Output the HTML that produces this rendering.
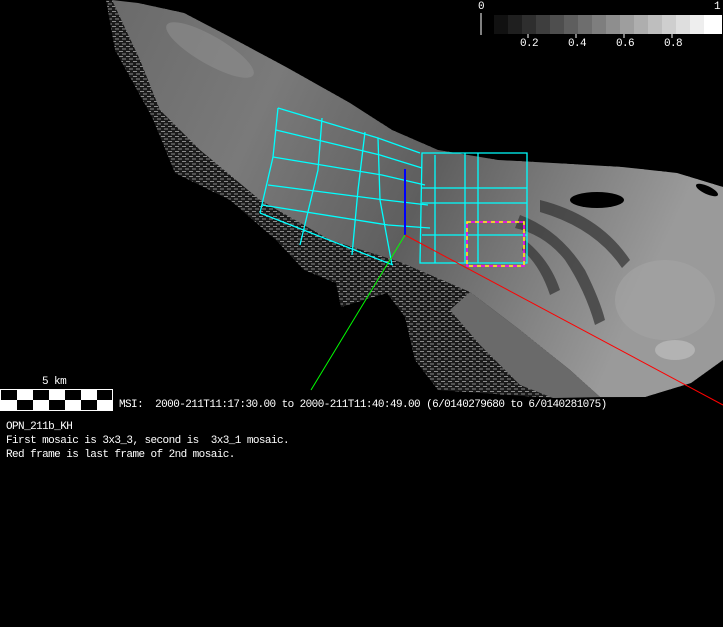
<!DOCTYPE html>
<html><head><style>
body{margin:0;background:#000;width:723px;height:627px;overflow:hidden;position:relative;font-family:"Liberation Mono",monospace;}
.t{position:absolute;color:#fff;font-size:11px;letter-spacing:-0.58px;white-space:pre;line-height:14px;}
</style></head><body>
<svg width="723" height="627" style="position:absolute;left:0;top:0">
<defs>
<pattern id="p" width="7" height="5" patternUnits="userSpaceOnUse">
<rect width="7" height="5" fill="#1a1a1a"/><path d="M0 1.5h4M3 4h4" stroke="#8a8a8a" stroke-width="1"/>
</pattern>
<linearGradient id="g" x1="0" y1="0" x2="1" y2="0.3">
<stop offset="0" stop-color="#6a6a6a"/><stop offset="0.3" stop-color="#7a7a7a"/><stop offset="0.6" stop-color="#5e5e5e"/><stop offset="1" stop-color="#9a9a9a"/>
</linearGradient>
</defs>
<path d="M106 0 L138 3 L184 13 L230 37 L286 67 L350 103 L392 130 L438 150 L498 160 L553 163 L622 167 L677 173 L723 187 L723 360 L691 383 L645 397 L553 398 L438 390 L415 360 L405 317 L387 293 L341 307 L336 283 L304 270 L276 240 L230 200 L175 173 L152 117 L115 50 Z" fill="url(#p)"/>
<path d="M112 0 L138 3 L184 13 L230 37 L286 67 L350 103 L392 130 L438 150 L498 160 L553 163 L622 167 L677 173 L723 187 L723 360 L691 383 L645 397 L600 397 L570 370 L520 330 L470 292 L400 262 L330 240 L260 200 L200 150 L160 110 L140 60 Z" fill="url(#g)"/>
<path d="M600 397 L570 370 L520 330 L470 292 L450 310 L480 345 L520 385 L553 398 Z" fill="#6a6a6a"/>
<g fill="#333" opacity="0.7">
<path d="M520 215 Q560 230 585 270 Q600 300 605 320 L595 325 Q585 290 565 260 Q545 235 515 228 Z"/>
<path d="M540 200 Q600 215 630 260 L622 268 Q595 228 540 212 Z"/>
<path d="M525 240 Q550 260 560 290 L550 295 Q540 265 522 250 Z"/>
</g>
<ellipse cx="597" cy="200" rx="27" ry="8" fill="#000"/>
<ellipse cx="707" cy="190" rx="12" ry="4" fill="#000" transform="rotate(25 707 190)"/>
<ellipse cx="665" cy="300" rx="50" ry="40" fill="#a5a5a5" opacity="0.6"/>
<ellipse cx="675" cy="350" rx="20" ry="10" fill="#ccc" opacity="0.5"/>
<ellipse cx="210" cy="50" rx="50" ry="14" fill="#8e8e8e" opacity="0.6" transform="rotate(30 210 50)"/>
<g stroke="#00ffff" stroke-width="1.3" fill="none">
<path d="M278 108 L378 138 L420 153"/>
<path d="M276 130 L380 155 L422 168"/>
<path d="M273 157 L382 175 L425 185"/>
<path d="M268 185 L385 200 L428 205"/>
<path d="M262 205 L388 225 L430 228"/>
<path d="M260 213 L393 265"/>
<path d="M278 108 L273 157 L260 213"/>
<path d="M322 118 L318 170 L300 245"/>
<path d="M365 132 L358 190 L352 255"/>
<path d="M378 138 L380 200 L392 265"/>
<path d="M422 153 L527 153 L527 263 L420 263 Z"/>
<path d="M422 188 L527 188 M422 203 L527 203 M422 235 L527 235"/>
<path d="M435 155 L435 263 M465 153 L465 263 M478 153 L478 263"/>
</g>
<rect x="467" y="222" width="57" height="44" fill="none" stroke="#ff00ff" stroke-width="1.5"/>
<rect x="467" y="222" width="57" height="44" fill="none" stroke="#ffff00" stroke-width="1.5" stroke-dasharray="4 4"/>
<path d="M405 169 L405 235" stroke="#0000ff" stroke-width="2"/>
<path d="M405 235 L723 405" stroke="#ff0000" stroke-width="1"/>
<path d="M405 235 L311 390" stroke="#00ff00" stroke-width="1"/>
<g>
<rect x="494" y="15" width="14" height="19" fill="#111"/><rect x="508" y="15" width="14" height="19" fill="#1f1f1f"/>
<rect x="522" y="15" width="14" height="19" fill="#2e2e2e"/><rect x="536" y="15" width="14" height="19" fill="#3e3e3e"/>
<rect x="550" y="15" width="14" height="19" fill="#4e4e4e"/><rect x="564" y="15" width="14" height="19" fill="#5e5e5e"/>
<rect x="578" y="15" width="14" height="19" fill="#6e6e6e"/><rect x="592" y="15" width="14" height="19" fill="#7e7e7e"/>
<rect x="606" y="15" width="14" height="19" fill="#8e8e8e"/><rect x="620" y="15" width="14" height="19" fill="#9e9e9e"/>
<rect x="634" y="15" width="14" height="19" fill="#aeaeae"/><rect x="648" y="15" width="14" height="19" fill="#bebebe"/>
<rect x="662" y="15" width="14" height="19" fill="#cecece"/><rect x="676" y="15" width="14" height="19" fill="#dedede"/>
<rect x="690" y="15" width="14" height="19" fill="#eee"/><rect x="704" y="15" width="18" height="19" fill="#fff"/>
<path d="M481 13 V35 M528 34 V38 M576 34 V38 M624 34 V38 M672 34 V38" stroke="#fff"/>
</g>
<rect x="0.5" y="389.5" width="112" height="21" fill="#fff" stroke="#fff"/>
<g fill="#000">
<rect x="1" y="390" width="16" height="10"/><rect x="33" y="390" width="16" height="10"/><rect x="65" y="390" width="16" height="10"/><rect x="97" y="390" width="15" height="10"/>
<rect x="17" y="400" width="16" height="10"/><rect x="49" y="400" width="16" height="10"/><rect x="81" y="400" width="16" height="10"/>
</g>
</svg>
<div class="t" style="left:478px;top:0px">0</div>
<div class="t" style="left:714px;top:0px">1</div>
<div class="t" style="left:520px;top:37px">0.2</div>
<div class="t" style="left:568px;top:37px">0.4</div>
<div class="t" style="left:616px;top:37px">0.6</div>
<div class="t" style="left:664px;top:37px">0.8</div>
<div class="t" style="left:42px;top:375px">5 km</div>
<div class="t" style="left:119px;top:398px">MSI:  2000-211T11:17:30.00 to 2000-211T11:40:49.00 (6/0140279680 to 6/0140281075)</div>
<div class="t" style="left:6px;top:420px">OPN_211b_KH
First mosaic is 3x3_3, second is  3x3_1 mosaic.
Red frame is last frame of 2nd mosaic.</div>
</body></html>
